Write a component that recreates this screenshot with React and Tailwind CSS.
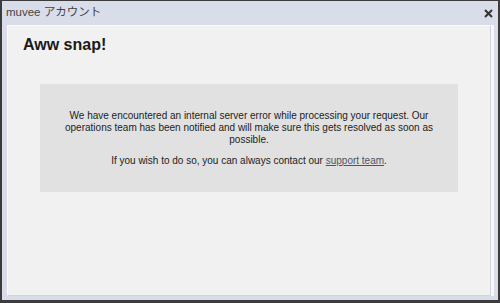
const App = () => {
  return (
    <div
      className="w-[500px] h-[303px] bg-[#3c3c3c] pt-px pl-[2px] pr-[2px] pb-[3px]"
      style={{ fontFamily: '"Liberation Sans", "Noto Sans CJK JP", sans-serif' }}
    >
      <div className="h-full flex flex-col bg-[#d9dde9]">
        {/* title bar */}
        <div className="h-[23px] flex items-center justify-between pl-[4px] pr-[5px]">
          <span className="text-[11.5px] text-[#444]">muvee アカウント</span>
          <svg width="9" height="9" viewBox="0 0 9 9" className="mt-[1px]">
            <path d="M1 1 L8 8 M8 1 L1 8" stroke="#333" strokeWidth="2" />
          </svg>
        </div>

        {/* body */}
        <div className="flex-1 flex pl-[5px] pr-[4px] pb-[4px] pt-px">
          <div className="flex-1 bg-[#f1f1f1] border border-[#d4d4d8] border-l-[#fafafa] border-t-[#fafafa] px-[16px] pt-[9px]">
            <h1 className="text-[16px] font-bold text-[#1a1a1a] leading-[20px] -ml-px">Aww snap!</h1>
            <div className="mt-[29px] mx-[16px] bg-[#e1e1e1] px-[24px] pt-[26px] pb-[25px] text-center text-[10px] leading-[12px] text-[#222]">
              <p>
                We have encountered an internal server error while processing your request. Our
                operations team has been notified and will make sure this gets resolved as soon as
                possible.
              </p>
              <p className="mt-[9px]">
                If you wish to do so, you can always contact our{" "}
                <a className="underline text-[#4d5566]">support team</a>.
              </p>
            </div>
          </div>
          <div className="w-[3px] bg-[#f7f7fa]" />
        </div>
      </div>
    </div>
  );
};

export default App;
